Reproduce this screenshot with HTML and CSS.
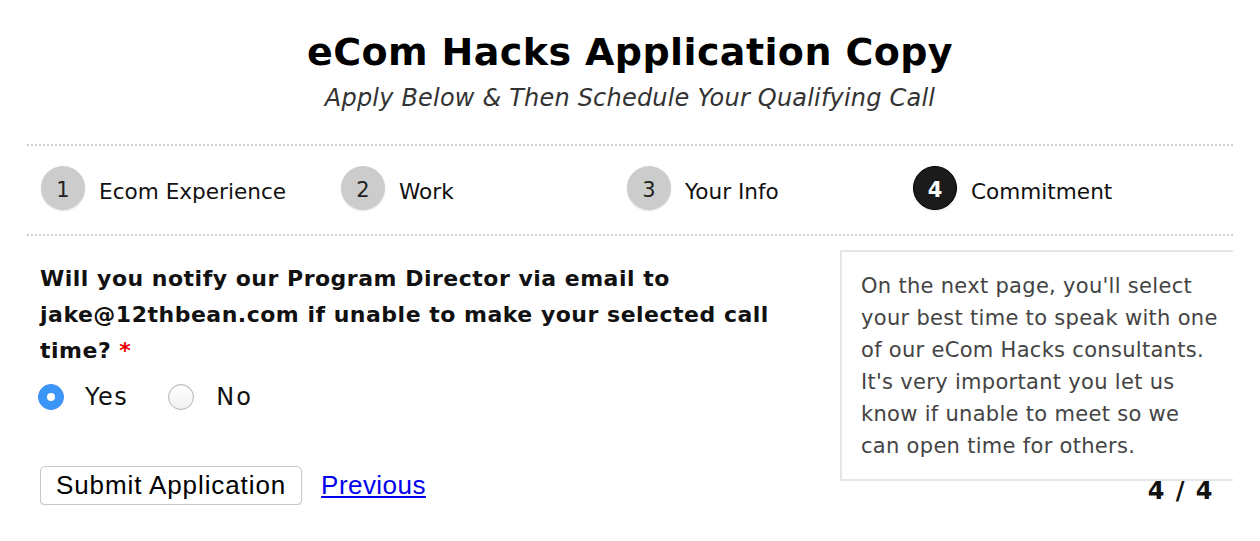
FILE: index.html
```html
<!DOCTYPE html>
<html>
<head>
<meta charset="utf-8">
<link rel="stylesheet" href="styles.css">
</head>
<body>
<div class="page">
  <header class="head">
    <h1 class="title">eCom Hacks Application Copy</h1>
    <p class="subtitle">Apply Below &amp; Then Schedule Your Qualifying Call</p>
  </header>
  <nav class="steps">
    <div class="step s1"><span class="num">1</span><span class="label">Ecom Experience</span></div>
    <div class="step s2"><span class="num">2</span><span class="label">Work</span></div>
    <div class="step s3"><span class="num">3</span><span class="label">Your Info</span></div>
    <div class="step s4 active"><span class="num">4</span><span class="label">Commitment</span></div>
  </nav>
  <div class="content">
    <div class="main">
      <p class="question">Will you notify our Program Director via email to<br>jake@12thbean.com if unable to make your selected call<br>time? <span class="req">*</span></p>
      <div class="choices">
        <label class="choice"><span class="radio checked"></span><span class="opt">Yes</span></label>
        <label class="choice"><span class="radio"></span><span class="opt">No</span></label>
      </div>
      <div class="actions">
        <button class="submit" type="button">Submit Application</button>
        <a class="prev" href="#">Previous</a>
      </div>
    </div>
    <aside class="side">
      <div class="info">On the next page, you'll select<br>your best time to speak with one<br>of our eCom Hacks consultants.<br>It's very important you let us<br>know if unable to meet so we<br>can open time for others.</div>
      <div class="pager">4 / 4</div>
    </aside>
  </div>
</div>
</body>
</html>
```
FILE: styles.css
```css
* { box-sizing: border-box; }
html, body { margin: 0; padding: 0; background: #fff; }
body { font-family: "DejaVu Sans", Verdana, sans-serif; color: #111; }

.page { margin: 0 27px; }

.head { text-align: center; padding-top: 30px; }
.title { margin: 0; font-size: 38px; line-height: 44px; font-weight: bold; color: #000; letter-spacing: 0.4px; }
.subtitle { margin: 8px 0 0; font-size: 24px; line-height: 32px; font-style: italic; color: #333; letter-spacing: 0.2px; }

.steps {
  margin-top: 30px;
  border-top: 2px dotted #cfcfcf;
  border-bottom: 2px dotted #cfcfcf;
  display: flex;
  align-items: center;
  padding: 20px 0 24px 14px;
}
.step { display: flex; align-items: center; gap: 14px; }
.s1 { width: 300px; }
.s2, .s3 { width: 286px; }
.num {
  width: 44px; height: 44px; border-radius: 50%;
  background: #cccccc; color: #222;
  display: flex; align-items: center; justify-content: center;
  font-size: 21px; padding-top: 3px;
  box-shadow: 0 1px 2px rgba(0,0,0,0.12);
}
.active .num { background: #1b1b1b; color: #fff; font-weight: bold; border: 1px solid #000; }
.label { font-size: 21.6px; color: #111; padding-top: 6px; }

.content { display: flex; }
.main { flex: 1; padding: 25px 0 0 13px; }
.question { margin: 0; font-size: 22px; line-height: 36px; font-weight: bold; color: #111; white-space: nowrap; letter-spacing: 0.5px; }
.req { color: #e00; }

.choices { display: flex; align-items: center; margin-top: 10px; height: 36px; }
.choice { display: flex; align-items: center; }
.choice + .choice { margin-left: 42px; }
.radio {
  width: 26px; height: 26px; border-radius: 50%;
  border: 1px solid #b5b5b5;
  background: linear-gradient(#ffffff, #f1f1f1);
  box-shadow: inset 0 1px 1px rgba(0,0,0,0.08);
  position: relative;
  margin-left: -2px;
}
.radio.checked { background: #3b96f7; border-color: #3a8ef0; box-shadow: none; }
.radio.checked::after {
  content: ""; position: absolute; left: 50%; top: 50%;
  width: 8px; height: 8px; margin: -4px 0 0 -4px; border-radius: 50%; background: #fff;
}
.opt { margin-left: 21px; font-size: 24px; color: #111; letter-spacing: 1.5px; }
.choice + .choice .opt { margin-left: 22px; letter-spacing: 2px; }

.actions { display: flex; align-items: center; margin-top: 51px; }
.submit {
  font-family: "Liberation Sans", Arial, sans-serif;
  font-size: 26px; letter-spacing: 0.9px;
  height: 39px; padding: 0 15px;
  background: #fff; color: #000;
  border: 1px solid #c8c8c8; border-radius: 5px;
  box-shadow: 0 1px 1px rgba(0,0,0,0.15);
}
.prev { margin-left: 19px; font-family: "Liberation Sans", Arial, sans-serif; font-size: 26px; color: #0000ee; text-decoration: underline; letter-spacing: 0.45px; }

.side { width: 393px; margin-top: 14px; }
.info {
  border: 2px solid #e6e6e6; border-right: 0;
  padding: 18px 0 17px 19px;
  font-size: 21px; line-height: 32px; color: #444;
  white-space: nowrap; letter-spacing: 0.3px;
}
.pager { text-align: right; padding-right: 19px; font-size: 24px; line-height: 20px; font-weight: bold; color: #111; letter-spacing: 1.5px; }
```
